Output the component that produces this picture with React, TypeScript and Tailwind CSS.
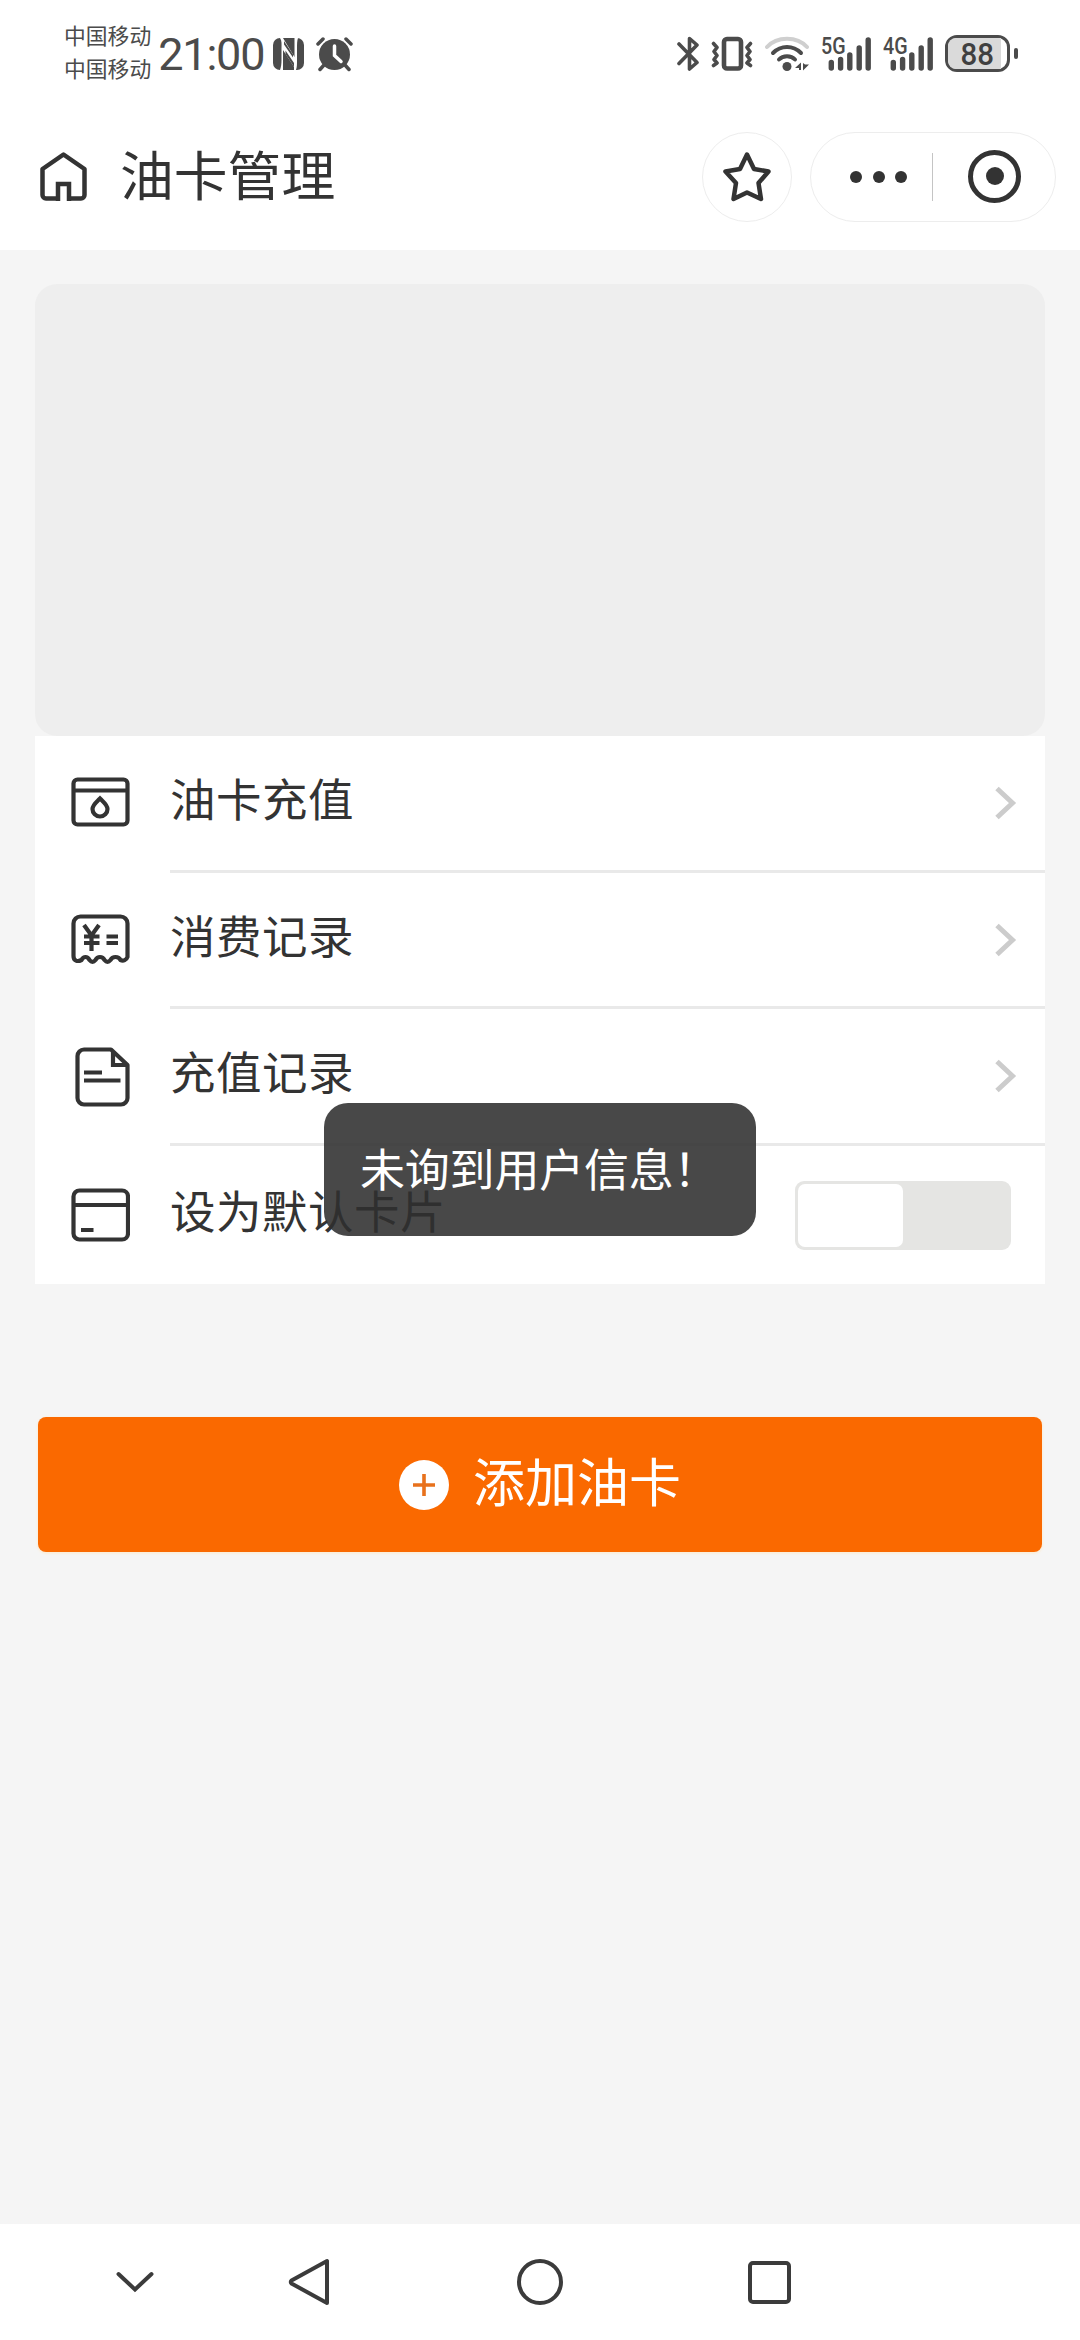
import { ReactNode } from "react";

interface RowProps {
    icon: ReactNode;
    title: string;
    className: string;
    border?: boolean;
    children?: ReactNode;
}

function Signal({ label }: { label: string }) {
    return (
        <div className="relative h-[36px] w-[50px]">
            <span className="absolute -top-[2px] left-0 origin-left scale-x-[0.82] font-['Roboto'] text-[24px] leading-[24px] font-medium">{label}</span>
            <svg className="absolute inset-0" width="50" height="36" fill="none" stroke="currentColor" strokeWidth="5.400" strokeLinecap="round">
                <path d="M10.3 26.5v5.5M19.6 23.5v8.5M28.8 19v13M38.2 12v20M47.2 4v28" />
            </svg>
        </div>
    );
}

function StatusBar() {
    return (
        <div className="flex h-[107px] items-center justify-between pr-[62px] pl-[64px] text-[#4b4b4b]">
            <div className="flex items-center">
                <div className="-mt-[5px] text-[21.8px] leading-[33px]">
                    <p>中国移动</p>
                    <p>中国移动</p>
                </div>
                <span className="ml-[7px] w-[115px] pt-[3px] font-['Roboto'] text-[45px] leading-[50px] tracking-[-1.2px] whitespace-nowrap">21:00</span>
                <svg width="31" height="32" viewBox="0 0 31 32" fill="none">
                    <rect width="31" height="32" rx="7" fill="currentColor" />
                    <path d="M7 0C9 3 8.500 6 8.500 10v12c0 4-.5 7-1.500 10h3V12l11 17v3h2c1-3 1-6 1-10V10c0-4 0-7 1-10h-3.500v19L10 0z" fill="#fff" />
                    <path d="M11 3l9 13.500v3L11 6.500zM12.500 12.500L21 25v4l-8.500-13z" fill="currentColor" />
                </svg>
                <svg className="ml-[12px]" width="37" height="36" viewBox="0 0 37 36">
                    <circle cx="18.500" cy="18.500" r="15.500" fill="currentColor" />
                    <path d="M2 8l5-5M35 8l-5-5M8 29l-4 4.500M29 29l4 4.500" stroke="currentColor" strokeWidth="3.500" strokeLinecap="round" />
                    <path d="M18.500 10v9.500l6.500 6" stroke="#fff" strokeWidth="3.500" strokeLinecap="round" fill="none" />
                </svg>
            </div>
            <div className="flex items-center">
                <svg width="22" height="36" viewBox="0 0 22 36" fill="none" stroke="currentColor" strokeWidth="3.600" strokeLinecap="round" strokeLinejoin="round">
                    <path d="M2 8l18 18.500L12.500 33V2.500L20 9 2 27.500" />
                </svg>
                <svg className="ml-[12px]" width="42" height="36" viewBox="0 0 42 36" fill="none" stroke="currentColor" strokeLinejoin="round" strokeLinecap="round">
                    <rect x="13" y="3" width="17" height="29.500" rx="3" strokeWidth="4.600" />
                    <path d="M2.500 7.500l3.500 4-3 4 3 4-3 4 3 3.500-3.500 2.500M39.500 7.500l-3.500 4 3 4-3 4 3 4-3 3.500 3.500 2.500" strokeWidth="3.600" />
                </svg>
                <svg className="ml-[12px]" width="44" height="36" viewBox="0 0 44 36" fill="none" strokeWidth="4" strokeLinecap="round">
                    <path d="M2 11c10-11 30-11 40 0" stroke="#cfcfcf" />
                    <path d="M8 17c8-8 20-8 28 0M14 23.500c4-4.500 12-4.500 16 0" stroke="currentColor" />
                    <circle cx="22" cy="30.500" r="4.500" fill="currentColor" />
                    <path d="M30 32l6-5.500v7.500h-2v-2zM38 27v7.500l6-6h-4z" fill="currentColor" />
                </svg>
                <div className="ml-[12px] flex gap-[12px]">
                    <Signal label="5G" />
                    <Signal label="4G" />
                </div>
                <div className="ml-[12px] flex h-[37px] w-[65px] rounded-[12px] border-[3px] border-current">
                    <div className="flex h-full w-[53px] items-center justify-center rounded-l-[8px] bg-[#dadada] pl-[5px]">
                        <span className="scale-x-[0.92] font-['Roboto'] text-[32px] leading-none font-medium text-[#404040]">88</span>
                    </div>
                </div>
                <div className="ml-[4px] h-[11px] w-[4px] rounded-full bg-current" />
            </div>
        </div>
    );
}

function Header() {
    return (
        <header className="flex h-[143px] items-start pt-[25px] pr-[24px] pl-[40px] text-[#333]">
            <div className="flex h-[90px] flex-grow items-center">
                <svg width="48" height="50" viewBox="0 0 48 50" fill="none" stroke="currentColor" strokeWidth="4.500" strokeLinejoin="round">
                    <path d="M18 49V32h11v17" strokeLinejoin="miter" />
                    <path d="M20 46.500H6a3.500 3.500 0 0 1-3.500-3.500V17L23.500 2.500 44.500 17v26a3.500 3.500 0 0 1-3.500 3.500H27" />
                </svg>
                <h1 className="-mt-[8px] ml-[32px] text-[53.8px] leading-none">油卡管理</h1>
            </div>
            <div className="flex h-[90px] w-[90px] items-center justify-center rounded-full border border-[#ededed]">
                <svg width="48" height="50" viewBox="0 0 48 50" fill="none" stroke="currentColor" strokeWidth="4.500" strokeLinejoin="round">
                    <path d="M24 2.500l7 14.500L45.500 19.500 35.500 31l2.500 16L24 40.500 10.500 47 13 31 2.500 19.500 17 17z" />
                </svg>
            </div>
            <div className="ml-[18px] flex h-[90px] w-[246px] items-center rounded-full border border-[#ededed] pl-[39px]">
                <div className="flex gap-[10.500px]">
                    <i className="h-[12px] w-[12px] rounded-full bg-current" />
                    <i className="h-[12px] w-[12px] rounded-full bg-current" />
                    <i className="h-[12px] w-[12px] rounded-full bg-current" />
                </div>
                <div className="ml-[25px] h-[48px] w-px bg-[#c4c4c4]" />
                <div className="mb-[2px] ml-[35px] flex h-[53px] w-[53px] items-center justify-center rounded-full border-[5.5px] border-current">
                    <i className="h-[18px] w-[18px] rounded-full bg-current" />
                </div>
            </div>
        </header>
    );
}

function Row({ icon, title, className, border = true, children }: RowProps) {
    return (
        <div className={`flex ${className}`}>
            <div className="flex w-[135px] flex-shrink-0 items-center pl-[36px]">{icon}</div>
            <div className={`flex flex-grow items-center justify-between ${border ? "border-b-[3px] border-[#e9e9e9]" : ""}`}>
                <span className="-mt-[10px] text-[45.5px] leading-none tracking-[0.5px]">{title}</span>
                {children}
            </div>
        </div>
    );
}

function Arrow() {
    return (
        <svg className="mr-[28px]" width="22" height="34" viewBox="0 0 22 34" fill="none" stroke="#ccc" strokeWidth="5">
            <path d="M2 2.500L17.500 17 2 31.500" />
        </svg>
    );
}

const iconProps = {
    fill: "none",
    stroke: "#333",
    strokeWidth: 4.2,
};

function App() {
    return (
        <div className="relative flex h-[2340px] w-[1080px] flex-col overflow-hidden bg-[#f5f5f5] font-['Noto_Sans_CJK_SC',sans-serif] text-[#333]">
            <div className="bg-white">
                <StatusBar />
                <Header />
            </div>

            <main className="flex-grow px-[35px] pt-[34px]">
                <div className="h-[452px] rounded-[22px] bg-[#eee]" />

                <div className="bg-white">
                    <Row
                        title="油卡充值"
                        className="h-[137px]"
                        icon={
                            <svg {...iconProps} className="-mt-[6px]" width="59" height="50" viewBox="0 0 59 50">
                                <rect x="2.500" y="2.500" width="54" height="45" rx="4" />
                                <path d="M2 13.500h54.500M29 21.500c4 4 7.500 6.500 7.500 10.500a7.500 7.500 0 0 1-15 0c0-4 3.500-6.500 7.500-10.500z" />
                            </svg>
                        }
                    >
                        <Arrow />
                    </Row>
                    <Row
                        title="消费记录"
                        className="h-[136px]"
                        icon={
                            <svg {...iconProps} className="-mt-[5px]" width="59" height="50" viewBox="0 0 59 50">
                                <path d="M9.500 2.500h40a7 7 0 0 1 7 7V43a5 5 0 0 1-7 3c-2-4-8-4-10 0-2 2.500-4 2.500-6 0-2-4-7-4-9 0-2 2.500-4 2.500-6 0-2-4-6-4-8 0-4 2-8 1-8-4V9.500a7 7 0 0 1 7-7z" />
                                <path d="M13 11l7.500 10.500L28 11M20.500 21.500V37M13 22.500h15.500M13 29h15.500M35.500 22.500H47M35.500 29H47" />
                            </svg>
                        }
                    >
                        <Arrow />
                    </Row>
                    <Row
                        title="充值记录"
                        className="h-[137px]"
                        icon={
                            <svg {...iconProps} className="-mt-[2px]" width="59" height="60" viewBox="0 0 59 60">
                                <path d="M13 2.500h27l16.500 15.500v33a6.500 6.500 0 0 1-6.500 6.500H13A6.500 6.500 0 0 1 6.500 51V9A6.500 6.500 0 0 1 13 2.500z" strokeLinejoin="round" />
                                <path d="M42 4v14h14M13 25.500h18M13 33.500h36.500" />
                            </svg>
                        }
                    >
                        <Arrow />
                    </Row>
                    <Row
                        title="设为默认卡片"
                        className="h-[138px]"
                        border={false}
                        icon={
                            <svg {...iconProps} width="59" height="54" viewBox="0 0 59 54">
                                <rect x="2.500" y="2.500" width="54.500" height="49" rx="6" />
                                <path d="M2 17h55M10 42h12.500" />
                            </svg>
                        }
                    >
                        <div className="mr-[34px] flex h-[69px] w-[216px] rounded-[9px] bg-[#e5e5e3] p-[3px]">
                            <div className="w-[105px] rounded-[7px] bg-white" />
                        </div>
                    </Row>
                </div>

                <button className="mx-[3px] mt-[133px] flex h-[135px] w-[1004px] items-center justify-center rounded-[8px] bg-[#fa6900] text-white shadow-[0_1px_2px_1px_#faeedb]">
                    <svg width="50" height="50" viewBox="0 0 50 50">
                        <circle cx="25" cy="25" r="25" fill="#fff" />
                        <path d="M14 25h22M25 14v22" stroke="#e8711c" strokeWidth="3.600" />
                    </svg>
                    <span className="-mt-[9px] ml-[24px] text-[52px] leading-none">添加油卡</span>
                </button>
            </main>

            <nav className="flex h-[116px] items-center bg-white text-[#3b3b3b]">
                <svg className="ml-[115px]" width="40" height="24" viewBox="0 0 40 24" fill="none" stroke="currentColor" strokeWidth="4" strokeLinecap="round">
                    <path d="M3.500 4L20 19.500 36.500 4" />
                </svg>
                <svg className="ml-[132px]" width="44" height="48" viewBox="0 0 44 48" fill="none" stroke="currentColor" strokeWidth="4" strokeLinejoin="round">
                    <path d="M40 3v42L4.500 25.500q-1.500-1.500 0-3z" />
                </svg>
                <div className="ml-[186px] h-[46px] w-[46px] rounded-full border-4 border-current" />
                <div className="ml-[185px] h-[43px] w-[43px] rounded-[5px] border-4 border-current" />
            </nav>

            {/* Toast */}
            <div className="absolute top-[1103px] left-[324px] flex h-[133px] w-[432px] items-center rounded-[24px] bg-[#2f2f2f]/88 pl-[36px]">
                <span className="-mt-[4px] text-[45px] leading-none tracking-[-0.2px] whitespace-nowrap text-white">未询到用户信息！</span>
            </div>
        </div>
    );
}

export default App;
